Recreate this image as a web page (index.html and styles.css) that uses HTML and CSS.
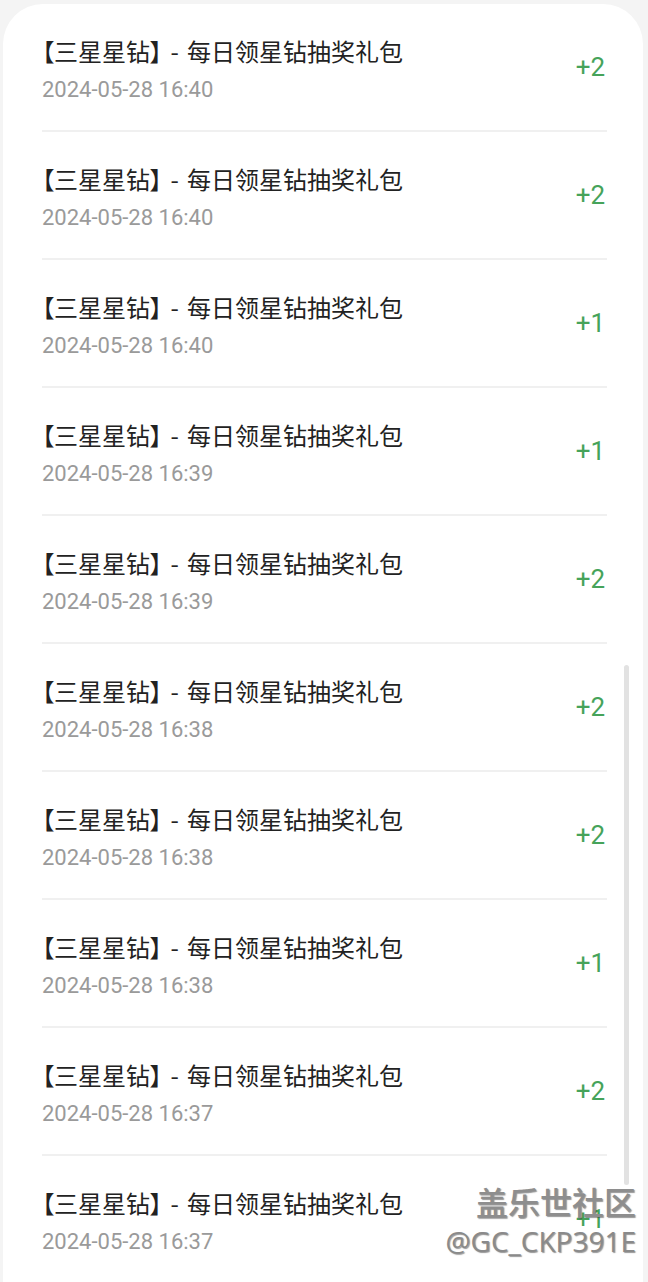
FILE: index.html
```html
<!DOCTYPE html>
<html lang="zh-CN">
<head>
<meta charset="utf-8">
<title>星钻记录</title>
<link rel="stylesheet" href="styles.css">
</head>
<body>
<div class="card">
  <ul class="list">
    <li class="row"><div class="info"><div class="title">【三星星钻】 - 每日领星钻抽奖礼包</div><div class="date">2024-05-28 16:40</div></div><div class="amount">+2</div></li>
    <li class="row"><div class="info"><div class="title">【三星星钻】 - 每日领星钻抽奖礼包</div><div class="date">2024-05-28 16:40</div></div><div class="amount">+2</div></li>
    <li class="row"><div class="info"><div class="title">【三星星钻】 - 每日领星钻抽奖礼包</div><div class="date">2024-05-28 16:40</div></div><div class="amount">+1</div></li>
    <li class="row"><div class="info"><div class="title">【三星星钻】 - 每日领星钻抽奖礼包</div><div class="date">2024-05-28 16:39</div></div><div class="amount">+1</div></li>
    <li class="row"><div class="info"><div class="title">【三星星钻】 - 每日领星钻抽奖礼包</div><div class="date">2024-05-28 16:39</div></div><div class="amount">+2</div></li>
    <li class="row"><div class="info"><div class="title">【三星星钻】 - 每日领星钻抽奖礼包</div><div class="date">2024-05-28 16:38</div></div><div class="amount">+2</div></li>
    <li class="row"><div class="info"><div class="title">【三星星钻】 - 每日领星钻抽奖礼包</div><div class="date">2024-05-28 16:38</div></div><div class="amount">+2</div></li>
    <li class="row"><div class="info"><div class="title">【三星星钻】 - 每日领星钻抽奖礼包</div><div class="date">2024-05-28 16:38</div></div><div class="amount">+1</div></li>
    <li class="row"><div class="info"><div class="title">【三星星钻】 - 每日领星钻抽奖礼包</div><div class="date">2024-05-28 16:37</div></div><div class="amount">+2</div></li>
    <li class="row"><div class="info"><div class="title">【三星星钻】 - 每日领星钻抽奖礼包</div><div class="date">2024-05-28 16:37</div></div><div class="amount">+1</div></li>
  </ul>
  <div class="scrollbar"></div>
</div>
<div class="watermark">
  <div class="wm-name">盖乐世社区</div>
  <div class="wm-user">@GC_CKP391E</div>
</div>
</body>
</html>
```

FILE: styles.css
```css
html, body {
  margin: 0;
  padding: 0;
}
body {
  background: #f4f4f4;
  font-family: "Noto Sans CJK SC", "Noto Sans", sans-serif;
  height: 1282px;
  overflow: hidden;
  position: relative;
}
.card {
  margin: 4px 5px 0 3px;
  background: #ffffff;
  border-radius: 40px 40px 0 0;
  padding: 0 36px 0 39px;
  height: 1400px;
  position: relative;
}
.list {
  list-style: none;
  margin: 0;
  padding: 0;
}
.row {
  display: grid;
  grid-template-columns: 1fr auto;
  height: 128px;
  box-sizing: border-box;
  border-bottom: 2px solid #f0f0f0;
}
.info {
  padding-top: 31px;
}
.title {
  font-size: 24px;
  line-height: 32px;
  color: #222222;
  white-space: nowrap;
  word-spacing: 3px;
  font-feature-settings: "palt";
}
.date {
  margin-top: 8px;
  font-family: Roboto, "Noto Sans", sans-serif;
  font-size: 22px;
  line-height: 30px;
  color: #9a9a9a;
}
.amount {
  align-self: center;
  font-family: Roboto, "Noto Sans", sans-serif;
  font-size: 26px;
  line-height: 30px;
  color: #46a35a;
  margin-right: 2px;
}
.scrollbar {
  position: absolute;
  left: 621px;
  top: 661px;
  width: 5px;
  height: 520px;
  border-radius: 3px;
  background: #e2e2e2;
}
.watermark {
  position: absolute;
  right: 12px;
  top: 1180px;
  text-align: right;
  color: #8e8e8e;
  text-shadow: 1px 1px 1px rgba(50, 50, 50, 0.5);
}
.wm-name {
  font-size: 32px;
  line-height: 42px;
  font-weight: 500;
  font-family: "Noto Sans CJK SC", sans-serif;
}
.wm-user {
  font-family: "Open Sans", "Noto Sans", sans-serif;
  font-size: 28px;
  line-height: 38px;
  color: #8a8a8a;
}
```
